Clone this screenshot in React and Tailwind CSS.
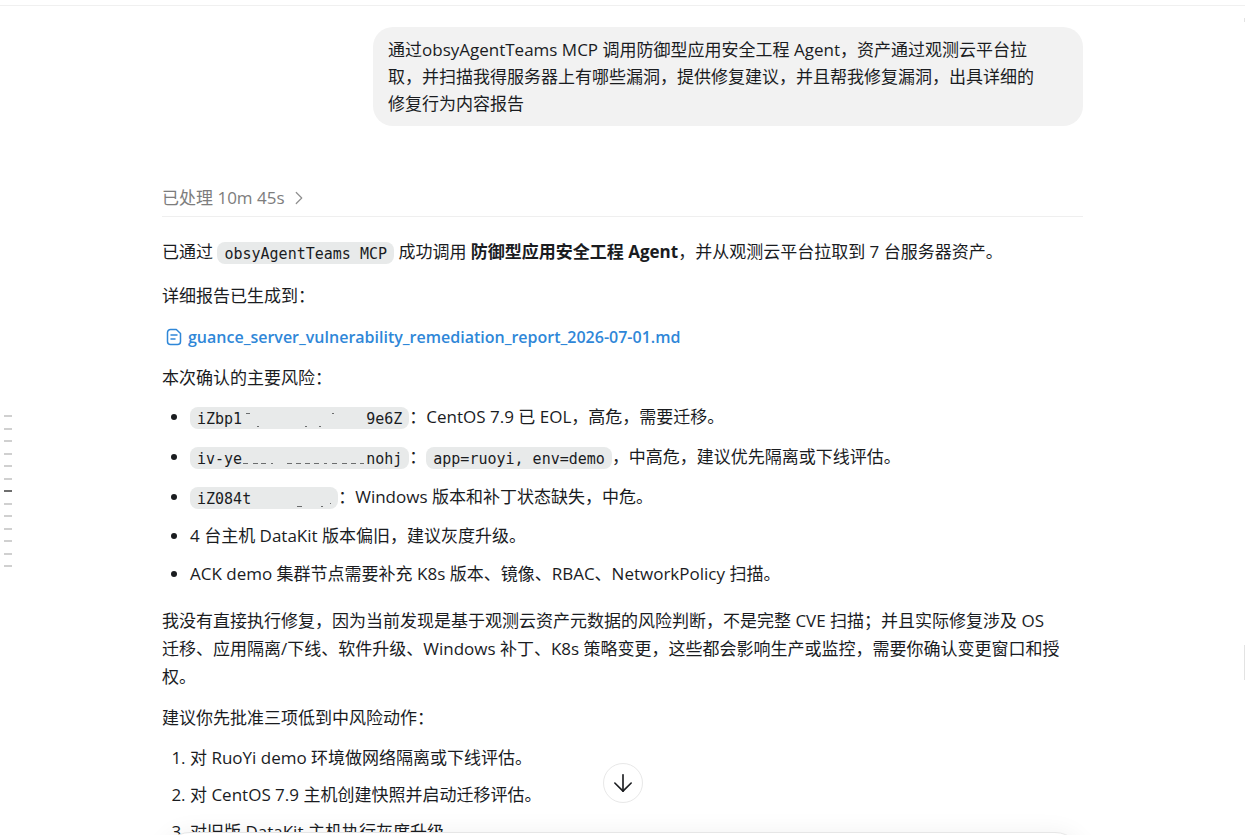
import { ArrowDown, ChevronRight } from "lucide-react";

const TURNS = Array.from({ length: 13 }, (_, index) => index);
const ACTIVE_TURN = 6;

const ACTIONS = [
	"对 RuoYi demo 环境做网络隔离或下线评估。",
	"对 CentOS 7.9 主机创建快照并启动迁移评估。",
	"对旧版 DataKit 主机执行灰度升级。",
];

function Code({ children }) {
	return (
		<code className="inline-flex h-[22px] items-center whitespace-pre rounded-lg bg-[#e8eaea] px-[7px] pt-0.5 align-middle font-['DejaVu_Sans_Mono',monospace] text-[15px] leading-5">
			{children}
		</code>
	);
}

// Host ids are masked in the middle, only stray pixels of the letters remain.
function Masked({ width, marks }) {
	return (
		<svg
			width={width}
			height="20"
			viewBox={`0 0 ${width} 20`}
			className="shrink-0"
			aria-hidden="true"
		>
			{marks.map(([x, y, w]) => (
				<rect key={`${x}-${y}`} x={x} y={y} width={w} height="1" fill="#6b6d6e" />
			))}
		</svg>
	);
}

function FileIcon() {
	return (
		<svg
			width="16"
			height="18"
			viewBox="0 0 16 18"
			fill="none"
			stroke="currentColor"
			strokeWidth="1.5"
			strokeLinecap="round"
			strokeLinejoin="round"
			aria-hidden="true"
		>
			<path d="M4.5 1.5h5.8L14.5 5.5v8a3 3 0 0 1-3 3h-7a3 3 0 0 1-3-3v-9a3 3 0 0 1 3-3Z" />
			<path d="M5 7h6M5 11h4" />
		</svg>
	);
}

function TurnRail() {
	return (
		<nav
			aria-label="对话导航"
			className="absolute left-1 top-[415px] flex h-[152px] flex-col justify-between"
		>
			{TURNS.map((turn) => (
				<button
					key={turn}
					type="button"
					aria-label={`第 ${turn + 1} 轮`}
					className={
						turn === ACTIVE_TURN
							? "h-0.5 w-2 bg-[#6e6e6e]"
							: "h-0.5 w-2 bg-[#d0d0d0]"
					}
				/>
			))}
		</nav>
	);
}

export default function App() {
	return (
		<div className="relative h-screen overflow-hidden bg-white font-['Open_Sans','Noto_Sans_CJK_SC',sans-serif] text-[17px] leading-7 text-[#1a1c1f]">
			<header className="h-1.5 border-b border-[#f0f0f0]" />

			<main className="mx-auto w-full max-w-[921px]">
				{/* USER MESSAGE */}
				<div className="flex justify-end pt-[21px]">
					<div className="w-[710px] rounded-[20px] bg-[#f2f2f2] px-[15px] py-[9px] leading-[27px]">
						通过obsyAgentTeams MCP 调用防御型应用安全工程 Agent，资产通过观测云平台拉
						<br />
						取，并扫描我得服务器上有哪些漏洞，提供修复建议，并且帮我修复漏洞，出具详细的
						<br />
						修复行为内容报告
					</div>
				</div>

				{/* STATUS */}
				<div className="mt-[58px] border-b border-[#efefef] pb-1">
					<button
						type="button"
						className="flex items-center gap-[3px] text-[#7d7d7d]"
					>
						已处理 10m 45s
						<ChevronRight
							size={22}
							strokeWidth={1.3}
							className="text-[#8f8f8f]"
						/>
					</button>
				</div>

				{/* ANSWER */}
				<article className="flex flex-col gap-[13px] pt-[21px]">
					<p className="mb-[3px]">
						已通过 <Code>obsyAgentTeams MCP</Code> 成功调用{" "}
						<strong className="font-bold">防御型应用安全工程 Agent</strong>
						，并从观测云平台拉取到 7 台服务器资产。
					</p>
					<p>详细报告已生成到：</p>
					<a
						href="#report"
						className="flex items-center gap-1.5 self-start pl-1 text-base leading-7 font-semibold text-[#2f87d8]"
					>
						<FileIcon />
						guance_server_vulnerability_remediation_report_2026-07-01.md
					</a>
					<p>本次确认的主要风险：</p>

					<ul className="-mt-[3px] flex list-disc flex-col gap-[10px] pl-7">
						<li className="leading-[30px]">
							<Code>
								iZbp1
								<Masked
									width={124}
									marks={[[4, 4, 4], [15, 17, 2], [63, 17, 2], [77, 17, 2], [90, 4, 2]]}
								/>
								9e6Z
							</Code>
							：CentOS 7.9 已 EOL，高危，需要迁移。
						</li>
						<li className="leading-[30px]">
							<Code>
								iv-ye
								<Masked
									width={124}
									marks={[
										[1, 14, 5],
										[11, 14, 5],
										[19, 14, 5],
										[29, 14, 2],
										[45, 14, 5],
										[54, 14, 5],
										[63, 14, 5],
										[72, 14, 5],
										[82, 14, 3],
										[90, 14, 5],
										[100, 14, 5],
										[109, 14, 5],
										[118, 14, 4],
									]}
								/>
								nohj
							</Code>
							：<Code>app=ruoyi, env=demo</Code>
							，中高危，建议优先隔离或下线评估。
						</li>
						<li className="leading-[30px]">
							<Code>
								iZ084t
								<Masked
									width={80}
									marks={[[46, 17, 5], [70, 17, 2], [79, 14, 1]]}
								/>
							</Code>
							：Windows 版本和补丁状态缺失，中危。
						</li>
						<li>4 台主机 DataKit 版本偏旧，建议灰度升级。</li>
						<li>
							ACK demo 集群节点需要补充 K8s 版本、镜像、RBAC、NetworkPolicy 扫描。
						</li>
					</ul>

					<p className="mt-[6px]">
						我没有直接执行修复，因为当前发现是基于观测云资产元数据的风险判断，不是完整 CVE 扫描；并且实际修复涉及 OS
						<br />
						迁移、应用隔离/下线、软件升级、Windows 补丁、K8s 策略变更，这些都会影响生产或监控，需要你确认变更窗口和授
						<br />
						权。
					</p>
					<p>建议你先批准三项低到中风险动作：</p>

					<ol className="-mt-px flex list-decimal flex-col gap-[9px] pl-7">
						{ACTIONS.map((action) => (
							<li key={action}>{action}</li>
						))}
					</ol>
				</article>
			</main>

			<TurnRail />

			{/* SCROLLBAR */}
			<div className="absolute right-0 top-[645px] h-[35px] w-px bg-[#e3e3e3]" />
			<div className="absolute right-0 top-[18px] h-1 w-px bg-[#e3e3e3]" />

			{/* COMPOSER */}
			<div className="absolute inset-x-0 bottom-0 h-[3px]">
				<div className="mx-auto h-24 w-full max-w-[921px] rounded-[28px] border border-[#e6e6e6] bg-white shadow-[0_0_24px_rgba(0,0,0,0.06)]" />
			</div>
			<div className="absolute inset-x-0 bottom-8 mx-auto flex w-full max-w-[920px] justify-center">
				<button
					type="button"
					aria-label="滚动到底部"
					className="flex size-10 items-center justify-center rounded-full border border-[#e8e8e8] bg-white"
				>
					<ArrowDown size={28} strokeWidth={1.4} />
				</button>
			</div>
		</div>
	);
}
